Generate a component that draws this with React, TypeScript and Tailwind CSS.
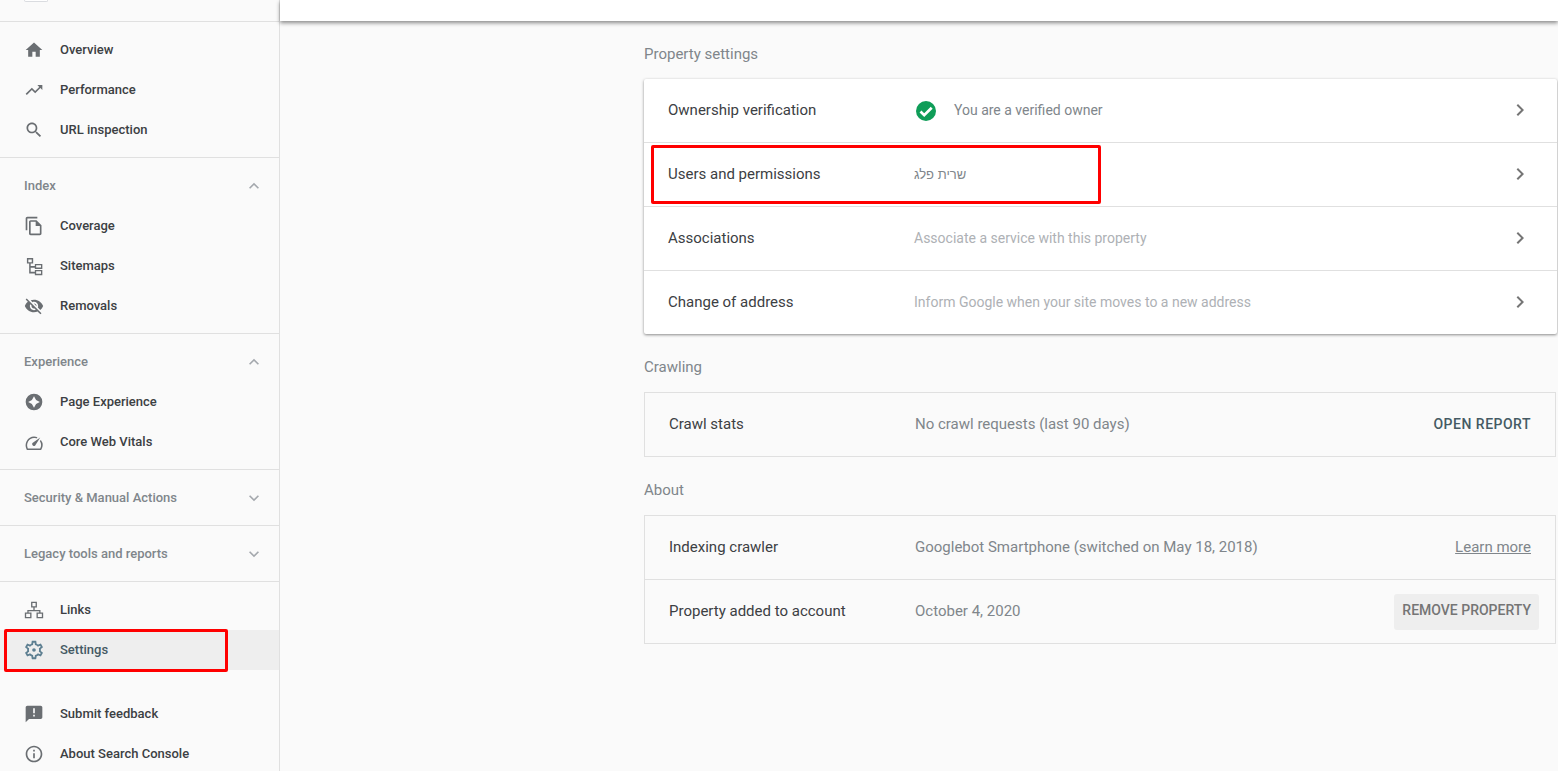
const font = { fontFamily: "Roboto, sans-serif" };

function Icon({ d, className = "text-[#6a6e72]", size = 20 }: { d: string; className?: string; size?: number }) {
  return (
    <svg width={size} height={size} viewBox="0 0 24 24" fill="currentColor" fillRule="evenodd" className={`shrink-0 ${className}`}>
      <path d={d} />
    </svg>
  );
}

const icons = {
  home: "M10 20v-6h4v6h5v-8h3L12 3 2 12h3v8z",
  trending: "M16 6l2.290 2.290-4.880 4.880-4-4L2 16.590 3.410 18l6-6 4 4 6.300-6.290L22 12V6z",
  search:
    "M15.500 14h-.79l-.28-.27C15.410 12.590 16 11.110 16 9.500 16 5.910 13.090 3 9.500 3S3 5.910 3 9.500 5.910 16 9.500 16c1.610 0 3.090-.59 4.230-1.570l.27.28v.79l5 4.990L20.490 19l-4.990-5zm-6 0C7.010 14 5 11.990 5 9.500S7.010 5 9.500 5 14 7.010 14 9.500 11.990 14 9.500 14z",
  coverage:
    "M16 1H4c-1.100 0-2 .9-2 2v14h2V3h12V1zm-1 4H8c-1.100 0-1.990.9-1.990 2L6 21c0 1.100.89 2 1.990 2H19c1.100 0 2-.9 2-2V11l-6-6zM8 21V7h6v5h5v9H8z",
  sitemaps:
    "M3.500 2.500H11V9H8v3h5V9.500h9v6h-9V14H8v5h5v-2.200h9V23h-9v-2H6.200V9H3.500zM5.200 4.200v3.200h4.100V4.200zM14.600 11.100v2.800h5.800v-2.800zM14.600 18.400v3h5.800v-3z",
  removals:
    "M12 7c2.760 0 5 2.240 5 5 0 .65-.13 1.260-.36 1.830l2.920 2.920c1.510-1.260 2.700-2.890 3.430-4.750-1.730-4.390-6-7.500-11-7.500-1.400 0-2.740.25-3.980.7l2.160 2.160C10.740 7.130 11.350 7 12 7zM2 4.270l2.280 2.280.46.46C3.080 8.300 1.780 10.020 1 12c1.730 4.390 6 7.500 11 7.500 1.550 0 3.030-.3 4.380-.84l.42.42L19.730 22 21 20.730 3.270 3 2 4.270zM7.530 9.800l1.550 1.550c-.05.21-.08.43-.08.65 0 1.660 1.340 3 3 3 .22 0 .44-.03.65-.08l1.550 1.550c-.67.33-1.410.53-2.200.53-2.760 0-5-2.240-5-5 0-.79.2-1.530.53-2.200zm4.310-.78l3.150 3.150.02-.16c0-1.660-1.340-3-3-3l-.17.01z",
  page: "M12 2a10 10 0 1 0 0 20 10 10 0 0 0 0-20zM12 5L14.500 9.500 19 12 14.500 14.500 12 19 9.500 14.500 5 12 9.500 9.500z",
  vitals:
    "M12 5.500A10.500 10.500 0 0 0 3.100 20.900 1.500 1.500 0 0 0 4.400 21.500H19.600A1.500 1.500 0 0 0 20.900 20.900 10.500 10.500 0 0 0 20.300 9.500L19 10.800A8.800 8.800 0 0 1 19.400 19.800H4.600A8.800 8.800 0 0 1 12 7.200C13 7.200 14 7.400 14.900 7.700L16.200 6.400A10.500 10.500 0 0 0 12 5.500zM19.500 6.500L11 12.500A2.200 2.200 0 0 0 10.600 16.200 2.200 2.200 0 0 0 14 15.400z",
  links:
    "M8.500 2h7v7h-2.700v3h7v3H23v7h-8v-7h3.200v-1.500H5.500V15H9v7H1v-7h3v-3h7.200V9H8.500zM10.100 3.600v3.800h3.800V3.600zM2.600 16.600v3.800h4.800v-3.800zM16.600 16.600v3.800h4.800v-3.800z",
  feedback:
    "M20 2H4c-1.100 0-1.990.9-1.990 2L2 22l4-4h14c1.100 0 2-.9 2-2V4c0-1.100-.9-2-2-2zm-7 9h-2V5h2v6zm0 4h-2v-2h2v2z",
  info: "M11 7h2v2h-2zm0 4h2v6h-2zm1-9C6.480 2 2 6.480 2 12s4.480 10 10 10 10-4.480 10-10S17.520 2 12 2zm0 18c-4.410 0-8-3.590-8-8s3.590-8 8-8 8 3.590 8 8-3.590 8-8 8z",
  gear:
    "M19.430 12.980c.04-.32.07-.64.07-.98 0-.34-.03-.66-.07-.98l2.110-1.650c.19-.15.24-.42.12-.64l-2-3.460c-.09-.16-.26-.25-.44-.25-.06 0-.12.01-.17.03l-2.490 1c-.52-.4-1.080-.73-1.690-.98l-.38-2.650C14.460 2.180 14.250 2 14 2h-4c-.25 0-.46.18-.49.42l-.38 2.650c-.61.25-1.170.59-1.690.98l-2.490-1c-.06-.02-.12-.03-.18-.03-.17 0-.34.09-.43.25l-2 3.460c-.13.22-.07.49.12.64l2.110 1.650c-.04.32-.07.65-.07.98 0 .33.03.66.07.98l-2.110 1.650c-.19.15-.24.42-.12.64l2 3.460c.09.16.26.25.44.25.06 0 .12-.01.17-.03l2.490-1c.52.4 1.080.73 1.690.98l.38 2.650c.03.24.24.42.49.42h4c.25 0 .46-.18.49-.42l.38-2.650c.61-.25 1.170-.59 1.690-.98l2.490 1c.06.02.12.03.18.03.17 0 .34-.09.43-.25l2-3.460c.12-.22.07-.49-.12-.64l-2.110-1.650zm-1.980-1.710c.04.31.05.52.05.73 0 .21-.02.43-.05.73l-.14 1.130.89.7 1.080.84-.7 1.210-1.270-.51-1.040-.42-.9.68c-.43.32-.84.56-1.250.73l-1.060.43-.16 1.130-.2 1.350h-1.400l-.19-1.350-.16-1.130-1.060-.43c-.43-.18-.83-.41-1.230-.71l-.91-.7-1.060.43-1.270.51-.7-1.210 1.080-.84.89-.7-.14-1.130c-.03-.31-.05-.54-.05-.74s.02-.43.05-.73l.14-1.130-.89-.7-1.080-.84.7-1.210 1.270.51 1.040.42.9-.68c.43-.32.84-.56 1.250-.73l1.060-.43.16-1.130.2-1.350h1.390l.19 1.350.16 1.130 1.060.43c.43.18.83.41 1.230.71l.91.7 1.060-.43 1.270-.51.7 1.210-1.070.85-.89.7.14 1.130zM12 10a2 2 0 1 0 0 4 2 2 0 0 0 0-4z",
  less: "M7.410 15.410L12 10.830l4.590 4.580L18 14l-6-6-6 6z",
  more: "M16.590 8.590L12 13.170 7.410 8.590 6 10l6 6 6-6z",
  chevron: "M10 6L8.590 7.410 13.170 12l-4.580 4.590L10 18l6-6z",
};

function NavItem({ icon, label, active }: { icon: string; label: string; active?: boolean }) {
  return (
    <div className={`h-10 flex items-center text-[13px] font-medium ${active ? "pl-[23px] bg-[#eeeeee] text-[#455a64]" : "pl-6 text-[#3c4043]"}`}>
      <Icon d={icon} size={active ? 22 : 20} className={active ? "text-[#5d7f91]" : "text-[#6a6e72]"} />
      <span className={active ? "ml-[15px]" : "ml-4"}>{label}</span>
    </div>
  );
}

function GroupHeader({ label, open, h = "h-14" }: { label: string; open: boolean; h?: string }) {
  return (
    <div className={`${h} flex items-center justify-between pl-6 pr-[15px] text-[13px] font-medium text-[#80868b]`}>
      <span>{label}</span>
      <Icon d={open ? icons.less : icons.more} className="text-[#a4a8ad]" />
    </div>
  );
}

function Sidebar() {
  return (
    <aside className="w-[280px] h-[771px] shrink-0 bg-[#fafafa] border-r border-[#e0e0e0] overflow-hidden flex flex-col">
      <div className="h-[22px] shrink-0 border-b border-[#e0e0e0] pl-6">
        <div className="w-6 h-[2px] bg-white border border-t-0 border-[#dadce0] rounded-b-sm" />
      </div>
      <div className="pt-2 pb-[7px] border-b border-[#e0e0e0]">
        <NavItem icon={icons.home} label="Overview" />
        <NavItem icon={icons.trending} label="Performance" />
        <NavItem icon={icons.search} label="URL inspection" />
      </div>
      <div className="pb-[7px] border-b border-[#e0e0e0]">
        <GroupHeader label="Index" open />
        <div className="-mt-2">
          <NavItem icon={icons.coverage} label="Coverage" />
          <NavItem icon={icons.sitemaps} label="Sitemaps" />
          <NavItem icon={icons.removals} label="Removals" />
        </div>
      </div>
      <div className="pb-[7px] border-b border-[#e0e0e0]">
        <GroupHeader label="Experience" open />
        <div className="-mt-2">
          <NavItem icon={icons.page} label="Page Experience" />
          <NavItem icon={icons.vitals} label="Core Web Vitals" />
        </div>
      </div>
      <div className="border-b border-[#e0e0e0]">
        <GroupHeader label="Security & Manual Actions" open={false} h="h-[55px]" />
      </div>
      <div className="border-b border-[#e0e0e0]">
        <GroupHeader label="Legacy tools and reports" open={false} h="h-[55px]" />
      </div>
      <div className="pt-2">
        <NavItem icon={icons.links} label="Links" />
        <div className="relative">
          <NavItem icon={icons.gear} label="Settings" active />
          <div className="absolute left-[4px] -top-px w-[224px] h-[43px] border-[3px] border-[#ff0000] rounded-[2px]" />
        </div>
      </div>
      <div className="pt-6">
        <NavItem icon={icons.feedback} label="Submit feedback" />
        <NavItem icon={icons.info} label="About Search Console" />
      </div>
    </aside>
  );
}

function LinkRow({ label, children, last }: { label: string; children: React.ReactNode; last?: boolean }) {
  return (
    <div className={`flex items-center pl-6 pr-[25px] ${last ? "h-[63px]" : "h-16 border-b border-[#e0e0e0]"}`}>
      <span className="w-[246px] text-[15px] text-[#3c4043]">{label}</span>
      <div className="flex-1 flex items-center text-[14px]">{children}</div>
      <div className="-mt-px">
        <Icon d={icons.chevron} size={24} className="text-[#757575]" />
      </div>
    </div>
  );
}

function FlatRow({ label, value, action, first }: { label: string; value: string; action: React.ReactNode; first?: boolean }) {
  return (
    <div className={`flex items-center pl-6 pr-6 ${first ? "h-[63px]" : "h-16 border-t border-[#e0e0e0]"}`}>
      <span className="w-[246px] text-[15px] text-[#3c4043]">{label}</span>
      <span className="flex-1 text-[15px] text-[#80868b]">{value}</span>
      {action}
    </div>
  );
}

function SectionTitle({ children }: { children: React.ReactNode }) {
  return <h2 className="h-[58px] pt-2 flex items-center text-[15px] text-[#80868b]">{children}</h2>;
}

function Main() {
  return (
    <main className="flex-1 min-w-0 flex flex-col">
      <div className="h-[21px] shrink-0 bg-white shadow-[0_2px_4px_rgba(0,0,0,0.45)]" />
      <div className="w-[913px] ml-[364px]">
        <SectionTitle>Property settings</SectionTitle>
        <section className="bg-white rounded-[2px] shadow-[0_1px_3px_rgba(0,0,0,0.45)] relative">
          <LinkRow label="Ownership verification">
            <svg width="22" height="22" viewBox="0 0 22 22" className="ml-px">
              <circle cx="11" cy="11" r="10" fill="#0f9d58" />
              <path d="M5.500 11.500l3.700 3.700L16.700 7.700" fill="none" stroke="#fff" strokeWidth="2.700" />
            </svg>
            <span className="ml-[17px] text-[#80868b]">You are a verified owner</span>
          </LinkRow>
          <LinkRow label="Users and permissions">
            <span className="text-[13px] text-[#80868b]" style={{ fontFamily: "'Liberation Sans', sans-serif" }}>שרית פלג</span>
          </LinkRow>
          <LinkRow label="Associations">
            <span className="text-[#aeb1b5]">Associate a service with this property</span>
          </LinkRow>
          <LinkRow label="Change of address" last>
            <span className="text-[#aeb1b5]">Inform Google when your site moves to a new address</span>
          </LinkRow>
          <div className="absolute left-[7px] top-[66px] w-[450px] h-[59px] border-[3px] border-[#ff0000] rounded-[2px]" />
        </section>
        <SectionTitle>Crawling</SectionTitle>
        <section className="border border-[#e0e0e0] mr-px">
          <FlatRow
            first
            label="Crawl stats"
            value="No crawl requests (last 90 days)"
            action={<span className="-mt-px text-[14px] font-medium tracking-[0.5px] text-[#455a64]">OPEN REPORT</span>}
          />
        </section>
        <SectionTitle>About</SectionTitle>
        <section className="border border-[#e0e0e0] mr-px">
          <FlatRow
            first
            label="Indexing crawler"
            value="Googlebot Smartphone (switched on May 18, 2018)"
            action={<span className="text-[15px] underline text-[#80868b]">Learn more</span>}
          />
          <FlatRow
            label="Property added to account"
            value="October 4, 2020"
            action={
              <span className="h-9 -mr-2 px-2 pb-0.5 flex items-center rounded-[3px] bg-[#eeeeee] text-[14px] font-medium text-[#757575]">
                REMOVE PROPERTY
              </span>
            }
          />
        </section>
      </div>
    </main>
  );
}

export default function App() {
  return (
    <div className="w-[1558px] h-[771px] flex overflow-hidden bg-[#fafafa]" style={font}>
      <Sidebar />
      <Main />
    </div>
  );
}
